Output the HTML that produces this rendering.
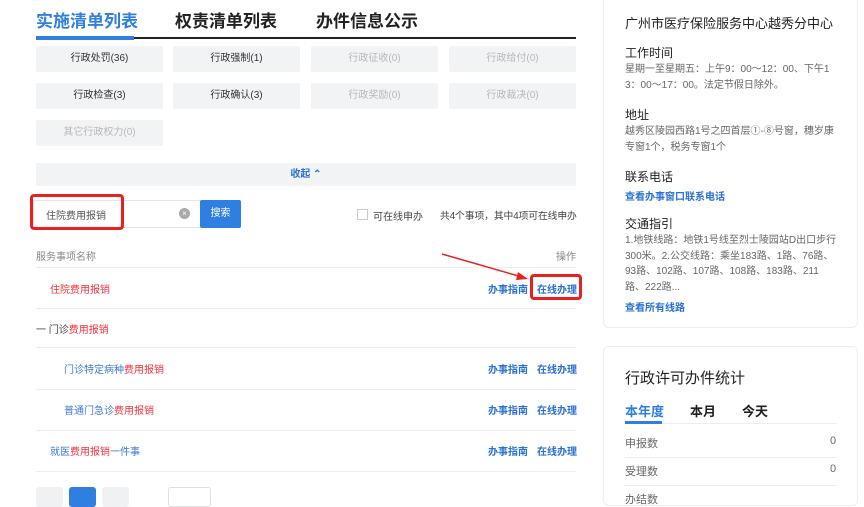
<!DOCTYPE html>
<html><head><meta charset="utf-8"><style>
*{margin:0;padding:0;box-sizing:border-box}
body{width:864px;height:495px;overflow:hidden;background:#fff;font-family:"Liberation Sans","Noto Sans CJK SC",sans-serif;position:relative;color:#333}
.a{position:absolute;white-space:nowrap}
.btn{position:absolute;height:26px;width:127px;background:#f2f3f5;border-radius:2px;font-size:10px;line-height:26px;text-align:center;color:#333}
.dis{color:#b8b8b8}
.ln{position:absolute;left:36px;width:540px;height:1px;background:#eceef0}
.r{font-size:10px}
.op{font-size:10px;color:#2a6fd3;font-weight:bold}
.red{color:#f0323c}
.blu{color:#3a7ad6}
.card{position:absolute;background:#fff;border:1px solid #eceef0;border-radius:6px}
.h{font-size:12px;color:#222}
.t{font-size:10px;color:#666;line-height:15.5px;white-space:normal;word-break:break-all}
.lk{font-size:10px;color:#2a6fd3;font-weight:bold}
</style></head><body>
<div class="a" style="left:36px;top:7px;font-size:17px;font-weight:bold;color:#2f7fe0">实施清单列表</div>
<div class="a" style="left:175px;top:7px;font-size:17px;font-weight:bold;color:#222">权责清单列表</div>
<div class="a" style="left:316px;top:7px;font-size:17px;font-weight:bold;color:#222">办件信息公示</div>
<div class="a" style="left:36px;top:37px;width:540px;height:2px;background:#222"></div>
<div class="a" style="left:36px;top:36px;width:98px;height:4px;background:#2f7fe0"></div>

<div class="btn" style="left:36px;top:46px">行政处罚(36)</div>
<div class="btn" style="left:173px;top:46px">行政强制(1)</div>
<div class="btn dis" style="left:311px;top:46px">行政征收(0)</div>
<div class="btn dis" style="left:449px;top:46px">行政给付(0)</div>
<div class="btn" style="left:36px;top:83px">行政检查(3)</div>
<div class="btn" style="left:173px;top:83px">行政确认(3)</div>
<div class="btn dis" style="left:311px;top:83px">行政奖励(0)</div>
<div class="btn dis" style="left:449px;top:83px">行政裁决(0)</div>
<div class="btn dis" style="left:36px;top:120px">其它行政权力(0)</div>
<div class="a" style="left:36px;top:163px;width:540px;height:23px;background:#f2f3f5;text-align:center;font-size:10px;line-height:23px;color:#2a6fd3;font-weight:bold">收起 ⌃</div>

<div class="a" style="left:33px;top:200px;width:168px;height:28px;border:1px solid #e3e5e8"></div>
<div class="a" style="left:46px;top:207px;font-size:10px;color:#555">住院费用报销</div>
<div class="a" style="left:179px;top:208px;width:11px;height:11px;border-radius:50%;background:#aaa;color:#fff;font-size:8px;line-height:11px;text-align:center">×</div>
<div class="a" style="left:200px;top:200px;width:41px;height:28px;background:#2f7fe0;border-radius:2px;color:#fff;font-size:10px;line-height:28px;text-align:center">搜索</div>
<div class="a" style="left:30px;top:194px;width:94px;height:36px;border:3px solid #e8201e;border-radius:4px"></div>
<div class="a" style="left:357px;top:209px;width:11px;height:11px;border:1px solid #ccc;background:#fff"></div>
<div class="a" style="left:373px;top:208px;font-size:10px;color:#444">可在线申办</div>
<div class="a" style="left:440px;top:208px;font-size:9.8px;color:#444;letter-spacing:-0.1px">共4个事项，其中4项可在线申办</div>

<div class="a" style="left:36px;top:248px;font-size:10px;color:#888">服务事项名称</div>
<div class="a" style="left:556px;top:248px;font-size:10px;color:#888">操作</div>
<div class="ln" style="top:267px"></div>
<div class="a r red" style="left:50px;top:281px">住院费用报销</div>
<div class="a op" style="left:488px;top:281px">办事指南</div>
<div class="a op" style="left:537px;top:281px">在线办理</div>
<div class="a" style="left:530px;top:274px;width:52px;height:26px;border:3px solid #e8201e;border-radius:4px"></div>
<svg class="a" style="left:440px;top:252px" width="90" height="30"><line x1="2" y1="2" x2="82" y2="25" stroke="#e8201e" stroke-width="1.5"/><polygon points="88,27 78,20 76,28" fill="#e8201e"/></svg>
<div class="ln" style="top:308px"></div>
<div class="a r" style="left:36px;top:321px;color:#444">一 门诊<span class="red">费用报销</span></div>
<div class="ln" style="top:347px"></div>
<div class="a r blu" style="left:64px;top:361px">门诊特定病种<span class="red">费用报销</span></div>
<div class="a op" style="left:488px;top:361px">办事指南</div>
<div class="a op" style="left:537px;top:361px">在线办理</div>
<div class="ln" style="top:389px"></div>
<div class="a r blu" style="left:64px;top:402px">普通门急诊<span class="red">费用报销</span></div>
<div class="a op" style="left:488px;top:402px">办事指南</div>
<div class="a op" style="left:537px;top:402px">在线办理</div>
<div class="ln" style="top:430px"></div>
<div class="a r blu" style="left:50px;top:443px">就医<span class="red">费用报销</span>一件事</div>
<div class="a op" style="left:488px;top:443px">办事指南</div>
<div class="a op" style="left:537px;top:443px">在线办理</div>
<div class="ln" style="top:471px"></div>
<div class="a" style="left:36px;top:487px;width:27px;height:20px;background:#f0f1f3;border-radius:3px"></div>
<div class="a" style="left:69px;top:487px;width:27px;height:20px;background:#2f7fe0;border-radius:3px"></div>
<div class="a" style="left:102px;top:487px;width:27px;height:20px;background:#f0f1f3;border-radius:3px"></div>
<div class="a" style="left:168px;top:487px;width:43px;height:20px;border:1px solid #dcdfe3;border-radius:3px"></div>

<div class="card" style="left:603px;top:-6px;width:255px;height:334px"></div>
<div class="a" style="left:625px;top:13px;font-size:13px;color:#222">广州市医疗保险服务中心越秀分中心</div>
<div class="a h" style="left:625px;top:44px">工作时间</div>
<div class="a t" style="left:625px;top:62px;width:212px">星期一至星期五：上午9：00～12：00、下午13：00～17：00。法定节假日除外。</div>
<div class="a h" style="left:625px;top:106px">地址</div>
<div class="a t" style="left:625px;top:124px;width:212px">越秀区陵园西路1号之四首层①-⑧号窗，穗岁康专窗1个，税务专窗1个</div>
<div class="a h" style="left:625px;top:168px">联系电话</div>
<div class="a lk" style="left:625px;top:188px">查看办事窗口联系电话</div>
<div class="a h" style="left:625px;top:215px">交通指引</div>
<div class="a t" style="left:625px;top:233px;width:212px">1.地铁线路：地铁1号线至烈士陵园站D出口步行300米。2.公交线路：乘坐183路、1路、76路、93路、102路、107路、108路、183路、211路、222路...</div>
<div class="a lk" style="left:625px;top:299px">查看所有线路</div>

<div class="card" style="left:603px;top:346px;width:255px;height:160px"></div>
<div class="a" style="left:625px;top:367px;font-size:15px;color:#222">行政许可办件统计</div>
<div class="a" style="left:625px;top:401px;font-size:13px;font-weight:bold;color:#2f7fe0">本年度</div>
<div class="a" style="left:690px;top:401px;font-size:13px;font-weight:bold;color:#222">本月</div>
<div class="a" style="left:742px;top:401px;font-size:13px;font-weight:bold;color:#222">今天</div>
<div class="a" style="left:625px;top:423px;width:212px;height:1px;background:#eceef0"></div>
<div class="a" style="left:625px;top:421px;width:37px;height:3px;background:#2f7fe0"></div>
<div class="a" style="left:625px;top:435px;font-size:11px;color:#666">申报数</div>
<div class="a" style="left:830px;top:435px;font-size:11px;color:#666">0</div>
<div class="a" style="left:625px;top:457px;width:212px;height:1px;background:#eceef0"></div>
<div class="a" style="left:625px;top:463px;font-size:11px;color:#666">受理数</div>
<div class="a" style="left:830px;top:463px;font-size:11px;color:#666">0</div>
<div class="a" style="left:625px;top:485px;width:212px;height:1px;background:#eceef0"></div>
<div class="a" style="left:625px;top:491px;font-size:11px;color:#666">办结数</div>
</body></html>
